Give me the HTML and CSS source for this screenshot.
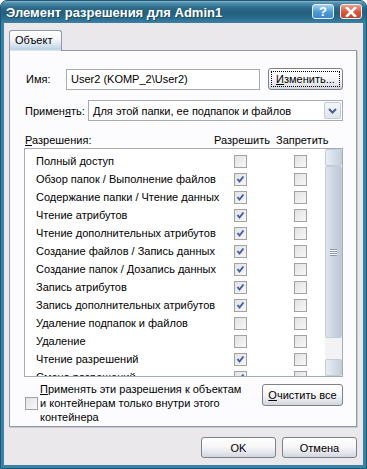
FILE: index.html
```html
<!DOCTYPE html>
<html lang="ru">
<head>
    <meta charset="UTF-8" />
    <title>Элемент разрешения для Admin1</title>
    <link rel="stylesheet" href="styles.css">
</head>
<body>

<div class="window">

    <div class="titlebar">
        <span class="title">Элемент разрешения для Admin1</span>
        <div class="caption-btns">
            <span class="cap-btn help">?</span>
            <span class="cap-btn close">
                <svg width="12" height="10" viewBox="0 0 12 10">
                    <path d="M2 1 L10 9 M10 1 L2 9" stroke="#fff" stroke-width="2.6" stroke-linecap="square" fill="none"/>
                </svg>
            </span>
        </div>
    </div>

    <div class="client">
        <div class="tabs">
            <div class="tab">Объект</div>
        </div>

        <div class="panel">

            <div class="name-row">
                <span class="label name-label">Имя:</span>
                <div class="textbox">User2 (KOMP_2\User2)</div>
                <button class="btn change-btn"><span class="focus"><u>И</u>зменить...</span></button>
            </div>

            <div class="apply-row">
                <span class="label apply-label">Примен<u>я</u>ть:</span>
                <div class="combo">
                    <span class="combo-text">Для этой папки, ее подпапок и файлов</span>
                    <span class="combo-drop">
                        <svg width="9" height="6" viewBox="0 0 9 6">
                            <path d="M1 1 L4.5 4.5 L8 1" stroke="#4d6185" stroke-width="2" fill="none"/>
                        </svg>
                    </span>
                </div>
            </div>

            <div class="perm-head">
                <span><u>Р</u>азрешения:</span>
                <span>Разрешить</span>
                <span>Запретить</span>
            </div>

            <div class="list">
                <div class="items">
                    <div class="item"><span>Полный доступ</span><span class="cb"></span><span></span><span class="cb"></span></div>
                    <div class="item"><span>Обзор папок / Выполнение файлов</span><span class="cb checked"></span><span></span><span class="cb"></span></div>
                    <div class="item"><span>Содержание папки / Чтение данных</span><span class="cb checked"></span><span></span><span class="cb"></span></div>
                    <div class="item"><span>Чтение атрибутов</span><span class="cb checked"></span><span></span><span class="cb"></span></div>
                    <div class="item"><span>Чтение дополнительных атрибутов</span><span class="cb checked"></span><span></span><span class="cb"></span></div>
                    <div class="item"><span>Создание файлов / Запись данных</span><span class="cb checked"></span><span></span><span class="cb"></span></div>
                    <div class="item"><span>Создание папок / Дозапись данных</span><span class="cb checked"></span><span></span><span class="cb"></span></div>
                    <div class="item"><span>Запись атрибутов</span><span class="cb checked"></span><span></span><span class="cb"></span></div>
                    <div class="item"><span>Запись дополнительных атрибутов</span><span class="cb checked"></span><span></span><span class="cb"></span></div>
                    <div class="item"><span>Удаление подпапок и файлов</span><span class="cb"></span><span></span><span class="cb"></span></div>
                    <div class="item"><span>Удаление</span><span class="cb"></span><span></span><span class="cb"></span></div>
                    <div class="item"><span>Чтение разрешений</span><span class="cb checked"></span><span></span><span class="cb"></span></div>
                    <div class="item"><span>Смена разрешений</span><span class="cb checked"></span><span></span><span class="cb"></span></div>
                </div>
                <div class="scrollbar">
                    <div class="sb-btn"></div>
                    <div class="sb-thumb"><span class="grip"></span></div>
                    <div class="sb-track"></div>
                    <div class="sb-btn"></div>
                </div>
            </div>

            <div class="bottom-row">
                <div class="inherit">
                    <span class="cb"></span>
                    <div class="inherit-text">
                        <div><u>П</u>рименять эти разрешения к объектам</div>
                        <div>и контейнерам только внутри этого</div>
                        <div>контейнера</div>
                    </div>
                </div>
                <button class="btn clear-btn"><u>О</u>чистить все</button>
            </div>

        </div>

        <div class="footer">
            <button class="btn footer-btn">OK</button>
            <button class="btn footer-btn">Отмена</button>
        </div>
    </div>

</div>

</body>
</html>
```

FILE: styles.css
```css
* {
    box-sizing: border-box;
}

body {
    margin: 0;
    font-family: "Liberation Sans", Arial, sans-serif;
    font-size: 11px;
    color: #000;
}

u {
    text-decoration: underline;
    text-underline-offset: 1px;
}

/* Window frame */
.window {
    width: 367px;
    height: 469px;
    display: flex;
    flex-direction: column;
    background: #3a82a9;
    border: 1px solid #1e5877;
    border-radius: 7px 7px 0 0;
    overflow: hidden;
}

.titlebar {
    height: 22px;
    display: flex;
    align-items: center;
    justify-content: space-between;
    padding: 0 4px 0 5px;
    background: linear-gradient(#8fb4c8 0, #4f8fae 2px, #2c6a89 7px, #255f7d 12px, #2b6c8b 17px, #3a81a5 22px);
}

.title {
    color: #fff;
    font-weight: bold;
    font-size: 13px;
    text-shadow: 1px 1px 0 #1b4a63;
}

.caption-btns {
    display: flex;
    gap: 6px;
    margin-top: -1px;
}

.cap-btn {
    width: 22px;
    height: 15px;
    border: 1px solid #e8f0f6;
    border-radius: 3px;
    display: flex;
    align-items: center;
    justify-content: center;
    color: #fff;
    font-weight: bold;
    font-size: 13px;
}

.help {
    background: linear-gradient(#a6d0ee, #4d9ad6 55%, #3c88c9);
}

.close {
    background: linear-gradient(#eea08c, #d8553a 55%, #c84428);
}

/* Client area */
.client {
    flex: 1;
    margin: 0 3px 3px;
    padding: 7px 6px 0 5px;
    background: #ebe8ec;
}

.tabs {
    height: 20px;
}

.tab {
    position: relative;
    z-index: 1;
    width: 53px;
    height: 21px;
    padding: 3px 0 0 5px;
    border: 1px solid #8f99a8;
    border-bottom: none;
    border-radius: 3px 3px 0 0;
    background: linear-gradient(#ffffff 0, #f6f7f9 40%, #d3e0ec 75%, #bcd1e4 90%, #e2eaf2 100%);
}

.panel {
    height: 377px;
    padding: 0 13px 0 14px;
    border: 1px solid #8f99a8;
    background: #fcfcfe;
    box-shadow: 1px 1px 0 #c9ccd4;
}

.name-row {
    margin-top: 17px;
    height: 22px;
    display: flex;
    align-items: center;
}

.name-label {
    width: 42px;
    padding-left: 2px;
}

.textbox {
    width: 194px;
    height: 21px;
    padding: 3px 0 0 4px;
    border: 1px solid #a5acb5;
    background: #fff;
}

.btn {
    font-family: inherit;
    font-size: 11px;
    color: #000;
    border: 1px solid #7d818d;
    border-radius: 3px;
    background: linear-gradient(#ffffff 0, #f7f7f9 45%, #e6e7ec 75%, #d2d5de 100%);
    padding: 0;
}

.change-btn {
    margin-left: auto;
    width: 75px;
    height: 22px;
    padding: 2px;
}

.focus {
    display: block;
    height: 16px;
    line-height: 15px;
    border: 1px dotted #000;
}

.apply-row {
    margin-top: 10px;
    height: 21px;
    display: flex;
    align-items: center;
}

.apply-label {
    width: 64px;
    padding-left: 1px;
}

.combo {
    flex: 1;
    height: 21px;
    display: flex;
    align-items: center;
    justify-content: space-between;
    border: 1px solid #a5acb5;
    background: #fff;
    padding: 0 1px 0 4px;
}

.combo-drop {
    width: 17px;
    height: 17px;
    display: flex;
    align-items: center;
    justify-content: center;
    border: 1px solid #c3cbd8;
    border-radius: 2px;
    background: linear-gradient(#f4f6fa, #dfe5ee);
}

.perm-head {
    margin-top: 13px;
    height: 14px;
    display: grid;
    grid-template-columns: 189px 62px auto;
    padding-left: 1px;
}

/* Permissions list */
.list {
    height: 229px;
    display: flex;
    border: 1px solid #a5acb5;
    background: #fff;
}

.items {
    flex: 1;
    overflow: hidden;
    padding-top: 3px;
}

.item {
    height: 18px;
    display: grid;
    grid-template-columns: 198px 13px 47px 13px;
    align-items: center;
    padding-left: 11px;
    white-space: nowrap;
}

.cb {
    flex: none;
    width: 13px;
    height: 13px;
    border: 1px solid #a3a3a3;
    background: linear-gradient(135deg, #e2e2e2, #f8f8f8);
}

.cb.checked {
    background-image: url("data:image/svg+xml,%3Csvg xmlns='http://www.w3.org/2000/svg' width='11' height='11'%3E%3Cpath d='M2.5 5 L4.5 7.5 L8.5 2.5' stroke='%234460a6' stroke-width='2' fill='none'/%3E%3C/svg%3E"), linear-gradient(135deg, #e2e2e2, #f8f8f8);
}

.scrollbar {
    width: 17px;
    display: flex;
    flex-direction: column;
    background: #f3f3f6;
}

.sb-btn {
    height: 17px;
    border: 1px solid #c4ccd8;
    border-radius: 2px;
    background: linear-gradient(90deg, #e9eef5, #d3dbe7 60%, #c8d0dd);
}

.sb-thumb {
    height: 172px;
    display: flex;
    align-items: center;
    justify-content: center;
    border: 1px solid #c4ccd8;
    border-radius: 2px;
    background: linear-gradient(90deg, #dfe6ef, #cad3e0 55%, #bfc8d6);
}

.grip {
    width: 7px;
    height: 7px;
    background: repeating-linear-gradient(#8e9bb1 0, #8e9bb1 1px, #f4f6fa 1px, #f4f6fa 2px);
}

.sb-track {
    flex: 1;
}

/* Bottom of panel */
.bottom-row {
    margin-top: 5px;
    display: flex;
    justify-content: space-between;
    align-items: flex-start;
}

.inherit {
    display: flex;
    align-items: center;
    padding-left: 1px;
}

.inherit-text {
    margin-left: 2px;
    line-height: 14px;
    white-space: nowrap;
}

.clear-btn {
    margin-top: 2px;
    width: 81px;
    height: 22px;
}

.footer {
    margin-top: 10px;
    display: flex;
    justify-content: flex-end;
    gap: 6px;
}

.footer-btn {
    width: 75px;
    height: 21px;
}
```
